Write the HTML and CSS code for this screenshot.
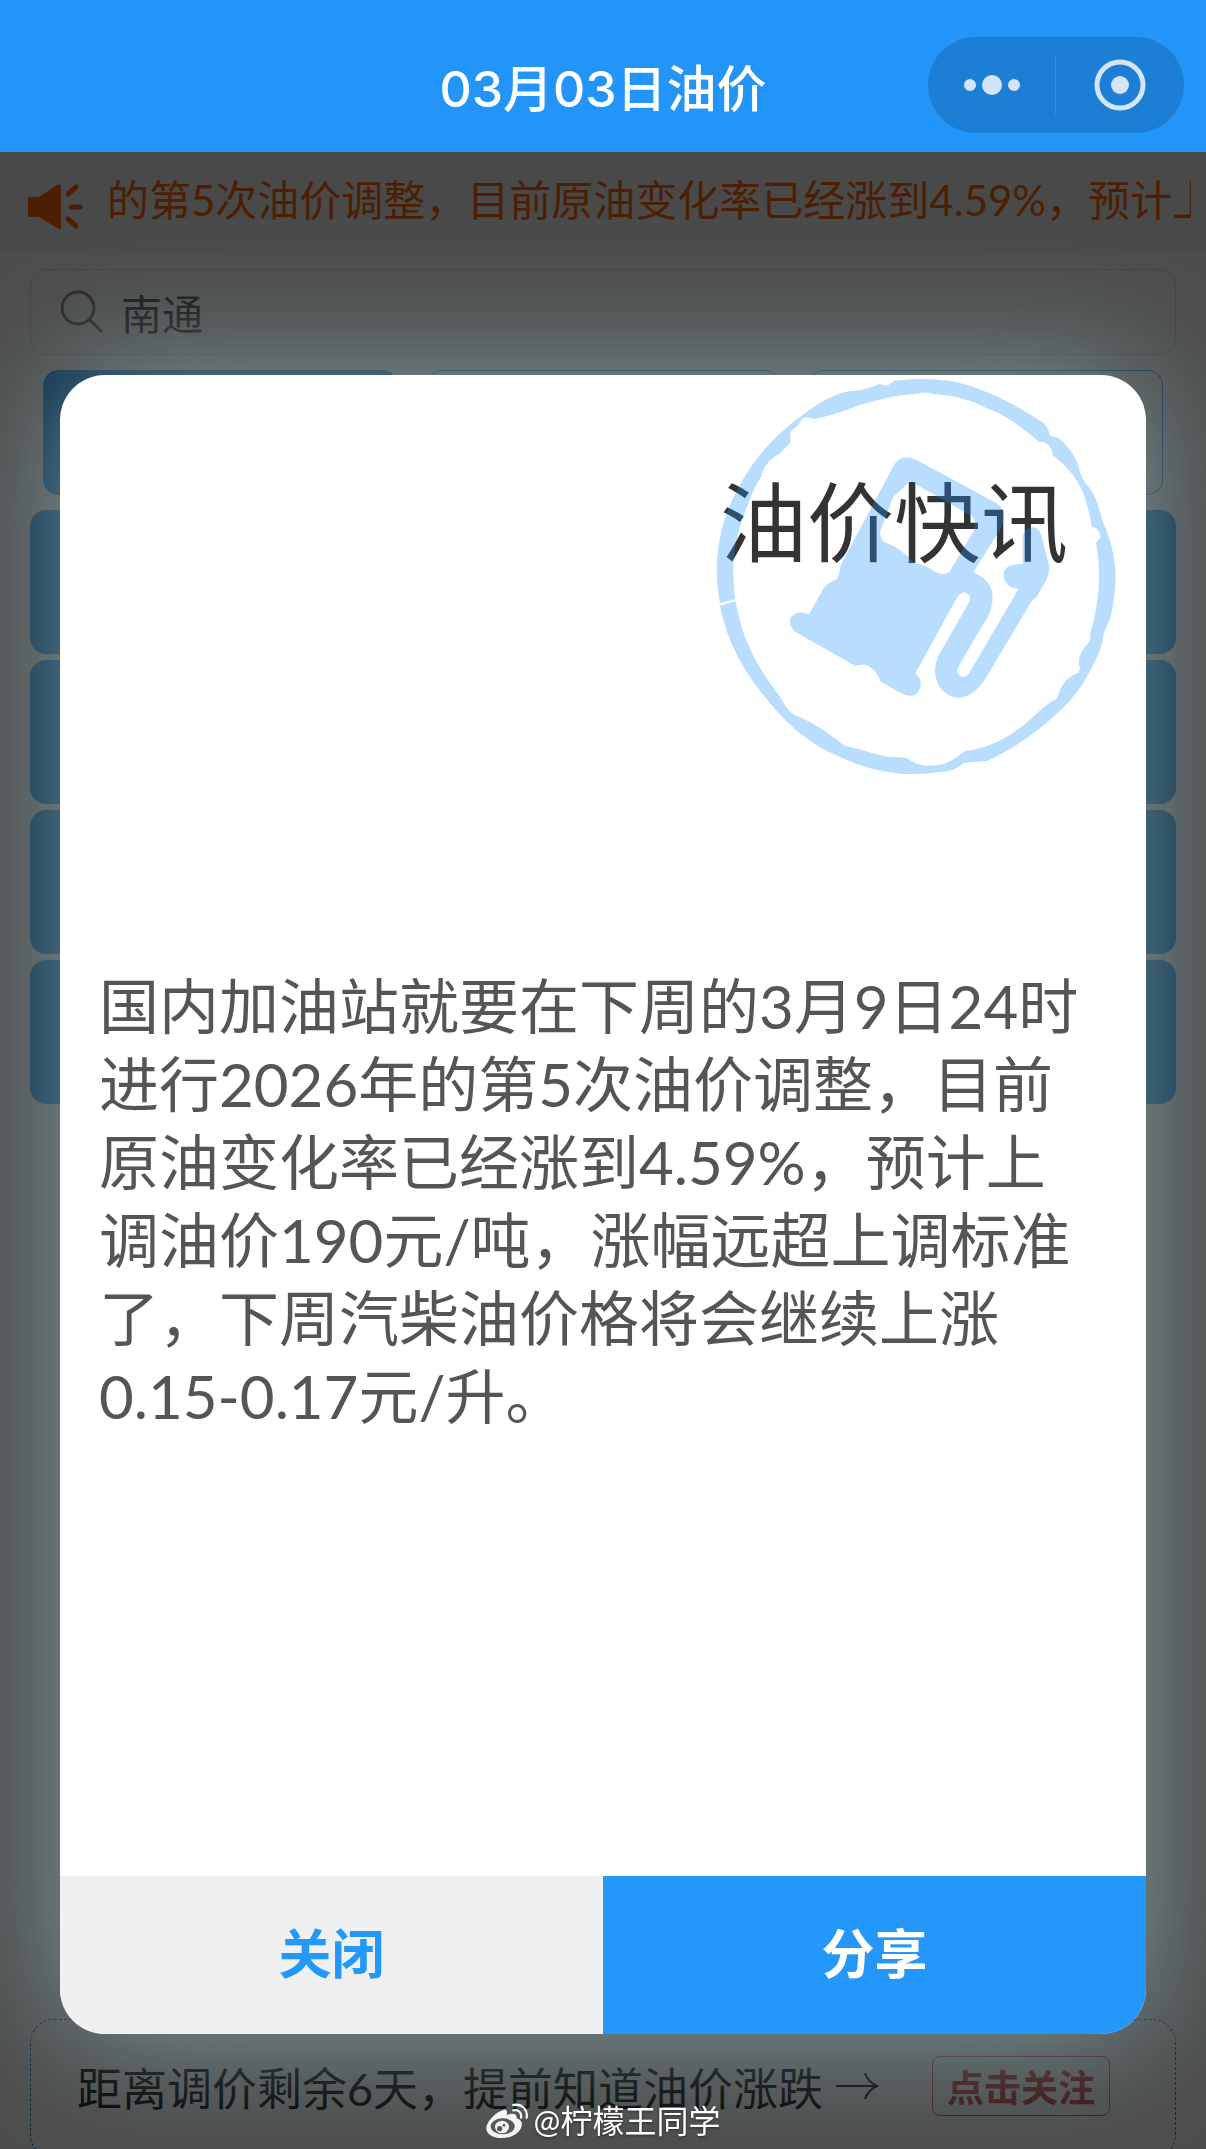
FILE: index.html
```html
<!DOCTYPE html>
<html lang="zh-CN">
<head>
    <meta charset="UTF-8">
    <meta name="viewport" content="width=device-width, initial-scale=1.0">
    <title>03月03日油价</title>
    <link rel="stylesheet" href="styles.css">
</head>
<body>
    <div class="page">
        <header class="navbar">
            <h1>03月03日油价</h1>
            <div class="capsule">
                <button class="capsule-btn" aria-label="更多">
                    <svg width="56" height="22" viewBox="0 0 56 22">
                        <circle cx="6" cy="11" r="6"/>
                        <circle cx="28" cy="11" r="10"/>
                        <circle cx="50" cy="11" r="6"/>
                    </svg>
                </button>
                <button class="capsule-btn" aria-label="关闭小程序">
                    <svg width="52" height="52" viewBox="0 0 52 52">
                        <circle cx="26" cy="26" r="23" fill="none" stroke="#d3e5f6" stroke-width="5"/>
                        <circle cx="26" cy="26" r="9"/>
                    </svg>
                </button>
            </div>
        </header>

        <div class="notice">
            <svg class="horn" width="56" height="46" viewBox="0 0 56 46">
                <path d="M2 13H11L29 1Q33-1 33 3V43Q33 47 29 44L11 33H2Q0 33 0 31V15Q0 13 2 13Z"/>
                <path d="M40 10L48 3M43 23H52M40 35L48 42" fill="none" stroke="#ff6a10" stroke-width="5" stroke-linecap="round"/>
            </svg>
            <p class="notice-text">的第5次油价调整，目前原油变化率已经涨到4.59%，预计上调油价190元/吨</p>
        </div>

        <label class="search">
            <svg width="42" height="44" viewBox="0 0 42 44">
                <circle cx="17" cy="18" r="16"/>
                <path d="M28 29L41 42"/>
            </svg>
            <input type="text" value="南通" aria-label="城市">
        </label>

        <div class="tabs">
            <div class="tab active"></div>
            <div class="tab"></div>
            <div class="tab"></div>
        </div>

        <div class="prices">
            <div class="price"></div>
            <div class="price"></div>
            <div class="price"></div>
            <div class="price"></div>
        </div>

        <div class="countdown">
            <p>距离调价剩余6天，提前知道油价涨跌</p>
            <svg width="44" height="30" viewBox="0 0 44 30">
                <path d="M1 15H41M30 2Q33 11 42 15Q33 19 30 28"/>
            </svg>
            <button class="follow">点击关注</button>
        </div>
    </div>

    <div class="mask">
        <div class="modal" role="dialog" aria-labelledby="modalTitle">
            <h2 id="modalTitle">油价快讯</h2>
            <!-- 油枪印章 -->
            <svg class="stamp" viewBox="60 45 1230 1215">
                <path d="M612 62C720 50 800 58 880 92C950 120 1010 155 1062 190Q1076 206 1080 228L1106 234Q1146 268 1164 312C1170 345 1180 365 1200 385C1220 415 1228 450 1240 490C1262 540 1277 595 1277 650C1276 700 1268 745 1260 775C1250 800 1240 812 1236 850C1225 890 1205 925 1183 963C1155 1010 1120 1045 1085 1075C1030 1125 960 1172 892 1203C865 1206 835 1205 817 1211C800 1228 780 1233 755 1235C700 1243 640 1245 590 1235C520 1225 470 1200 425 1180C340 1140 275 1075 220 1005C150 920 110 835 90 737L137 724C155 835 200 920 270 1010Q290 1050 315 1066C365 1085 410 1115 465 1158C510 1165 545 1182 595 1190Q635 1192 650 1194Q680 1215 710 1217Q755 1217 770 1208Q790 1200 825 1173C900 1165 970 1125 1025 1075Q1070 1030 1100 1016L1112 985Q1130 950 1165 938L1170 925C1160 895 1175 870 1195 850Q1205 835 1200 825C1215 770 1228 710 1227 640C1226 600 1223 570 1218 548L1232 530Q1225 500 1205 500C1200 460 1190 430 1178 395C1155 345 1130 320 1088 285Q1088 260 1062 247L1045 244C990 195 935 160 890 145C850 122 800 108 735 103Q700 92 680 102C620 105 570 118 520 132C490 140 450 160 415 167L370 178Q350 165 335 178Q325 200 303 212Q298 225 303 245Q290 260 270 280C245 295 225 310 213 350C190 385 180 420 165 455C145 510 132 560 130 620Q130 680 135 717L90 730C75 650 78 580 95 510C115 430 155 355 205 290C250 235 300 190 355 152C400 120 440 100 480 93C520 92 545 80 570 72Q590 85 612 62Z"/>
                <path fill-rule="evenodd" d="M612 315Q635 280 680 300L912 425Q960 450 930 510L850 637Q925 670 903 745Q895 775 875 800L805 920Q795 940 812 949Q830 955 842 932L985 688L960 680Q935 662 942 633Q955 610 998 612V530Q1005 500 1030 502Q1050 505 1056 535L1077 615Q1080 650 1060 675L1040 710Q1020 725 1012 745L890 950Q850 1015 800 1013Q740 1000 735 935Q735 900 755 870L838 725Q845 705 825 697Q810 698 800 715L676 940Q695 955 692 980Q680 1015 645 1005L572 965Q560 930 530 915Q515 912 495 917L315 815Q295 795 300 775Q315 750 357 762L400 687Q410 670 440 658Q450 640 452 615ZM658 362Q640 385 610 410L570 515Q570 535 582 545Q635 565 672 608Q710 615 735 635Q765 650 780 632L853 510Q860 475 840 465Z"/>
            </svg>
            <div class="modal-body">
                <p>国内加油站就要在下周的3月9日24时进行2026年的第5次油价调整，目前原油变化率已经涨到4.59%，预计上调油价190元/吨，涨幅远超上调标准了，下周汽柴油价格将会继续上涨0.15-0.17元/升。</p>
            </div>
            <div class="modal-footer">
                <button class="btn-close">关闭</button>
                <button class="btn-share">分享</button>
            </div>
        </div>
    </div>

    <div class="watermark">
        <svg width="42" height="36" viewBox="0 0 126 108">
            <path d="M50 22C60 15 66 24 62 37C76 30 94 30 92 46C104 50 110 58 107 68C103 91 76 105 46 105C20 105 0 92 1 74C3 54 30 28 50 22Z"/>
            <path d="M82 22C98 19 108 30 105 44M82 6C108 1 126 20 122 44" fill="none" stroke="#f4f4f4" stroke-width="7" stroke-linecap="round"/>
            <ellipse cx="50" cy="70" rx="36" ry="24" fill="#54595a"/>
            <ellipse cx="48" cy="72" rx="21" ry="19"/>
            <circle cx="41" cy="77" r="8" fill="#54595a"/>
            <circle cx="54" cy="67" r="4" fill="#54595a"/>
        </svg>
        <span>@柠檬王同学</span>
    </div>
</body>
</html>
```

FILE: styles.css
```css
* {
    box-sizing: border-box;
}
body {
    margin: 0;
    font-family: Lato, "Noto Sans CJK SC", sans-serif;
    background-color: #fff;
}
h1, h2, p {
    margin: 0;
}
button {
    border: none;
    padding: 0;
    font-family: inherit;
    cursor: pointer;
}
svg {
    flex: none;
}
.page {
    display: flex;
    flex-direction: column;
    height: 100vh;
    overflow: hidden;
}

/* 顶部导航 */
.navbar {
    flex: none;
    display: grid;
    grid-template-columns: 1fr auto 1fr;
    align-items: center;
    height: 152px;
    padding: 18px 22px 0;
    background-color: #2394f8;
}
.navbar h1 {
    grid-column: 2;
    font-family: Inter, "Noto Sans CJK SC", sans-serif;
    font-size: 50px;
    font-weight: 500;
    color: #fff;
}
.capsule {
    justify-self: end;
    display: flex;
    width: 256px;
    height: 96px;
    border-radius: 48px;
    background-color: #1c7fd5;
}
.capsule-btn {
    flex: 1;
    display: flex;
    align-items: center;
    justify-content: center;
    background: linear-gradient(#2f8ddd, #2f8ddd) no-repeat right center / 0 60px;
}
.capsule-btn:first-child {
    background-size: 1px 60px;
}
.capsule-btn svg {
    fill: #d3e5f6;
}

/* 滚动公告 */
.notice {
    flex: none;
    display: flex;
    align-items: center;
    gap: 26px;
    height: 102px;
    padding: 0 15px 6px 28px;
    background-color: #f6f6f6;
    color: #ff6a10;
}
.horn {
    margin-top: 14px;
    fill: #ff6a10;
}
.notice-text {
    flex: 1;
    overflow: hidden;
    white-space: nowrap;
    text-indent: -3px;
    font-size: 42px;
    line-height: 60px;
}

/* 城市搜索 */
.search {
    flex: none;
    display: flex;
    align-items: center;
    gap: 18px;
    height: 86px;
    margin: 15px 30px;
    padding: 0 30px;
    border: 1px solid #d8dce4;
    border-radius: 15px;
}
.search svg {
    fill: none;
    stroke: #888;
    stroke-width: 3;
}
.search input {
    flex: 1;
    min-width: 0;
    padding: 0;
    border: none;
    outline: none;
    background: none;
    font-family: inherit;
    font-size: 41px;
    color: #555;
}

/* 油号切换 */
.tabs {
    flex: none;
    display: flex;
    gap: 28px;
    margin: 0 43px 15px;
}
.tab {
    flex: 1;
    height: 125px;
    border: 1px solid #2196f3;
    border-radius: 15px;
}
.tab.active {
    background-color: #2196f3;
}
.prices {
    flex: none;
    display: flex;
    flex-direction: column;
    gap: 6px;
    padding: 0 30px;
}
.price {
    height: 144px;
    border-radius: 16px;
    background-color: #2196f3;
}

/* 调价倒计时 */
.countdown {
    flex: none;
    display: flex;
    align-items: center;
    height: 140px;
    margin: auto 30px -10px;
    padding: 0 65px 6px 46px;
    border: 1px dashed #2a7fc4;
    border-radius: 24px;
    font-size: 45px;
    color: #111;
}
.countdown svg {
    margin: 0 auto 0 12px;
    fill: none;
    stroke: #111;
    stroke-width: 2;
}
.follow {
    width: 178px;
    height: 60px;
    border: 1px solid #d86060;
    border-radius: 8px;
    background: none;
    font-size: 37px;
    font-weight: 700;
    color: #d04040;
}

/* 弹窗 */
.mask {
    position: fixed;
    top: 152px;
    right: 0;
    bottom: 0;
    left: 0;
    display: flex;
    padding: 223px 60px 115px;
    overflow: hidden;
    background-color: rgba(0, 0, 0, 0.7);
}
.modal {
    position: relative;
    flex: 1;
    display: flex;
    flex-direction: column;
    border-radius: 45px;
    background-color: #fff;
    box-shadow: 0 0 130px rgba(135, 168, 172, 0.85);
}
.modal h2 {
    padding: 84px 78px 0;
    font-size: 87px;
    font-weight: 400;
    line-height: 128px;
    text-align: right;
    color: #333;
}
.stamp {
    position: absolute;
    top: 0;
    right: 26px;
    width: 410px;
    fill: #1e94ff;
    opacity: 0.31;
}
.modal-body {
    flex: 1;
    display: flex;
    align-items: center;
    padding: 0 41px 62px 39px;
}
.modal-body p {
    font-size: 60px;
    line-height: 78px;
    color: #555;
}
.modal-footer {
    display: flex;
    height: 158px;
    border-radius: 0 0 45px 45px;
    overflow: hidden;
}
.modal-footer button {
    flex: 1;
    padding-bottom: 8px;
    font-size: 53px;
    font-weight: 700;
}
.btn-close {
    background-color: #f0f0f0;
    color: #2398fa;
}
.btn-share {
    background-color: #2398fa;
    color: #fff;
}

.watermark {
    position: fixed;
    right: 0;
    bottom: 4px;
    left: 0;
    display: flex;
    align-items: center;
    justify-content: center;
    gap: 6px;
    font-size: 32px;
    line-height: 48px;
    color: #fff;
    text-shadow: 0 1px 3px rgba(0, 0, 0, 0.5);
}
.watermark svg {
    fill: #f4f4f4;
}
```
